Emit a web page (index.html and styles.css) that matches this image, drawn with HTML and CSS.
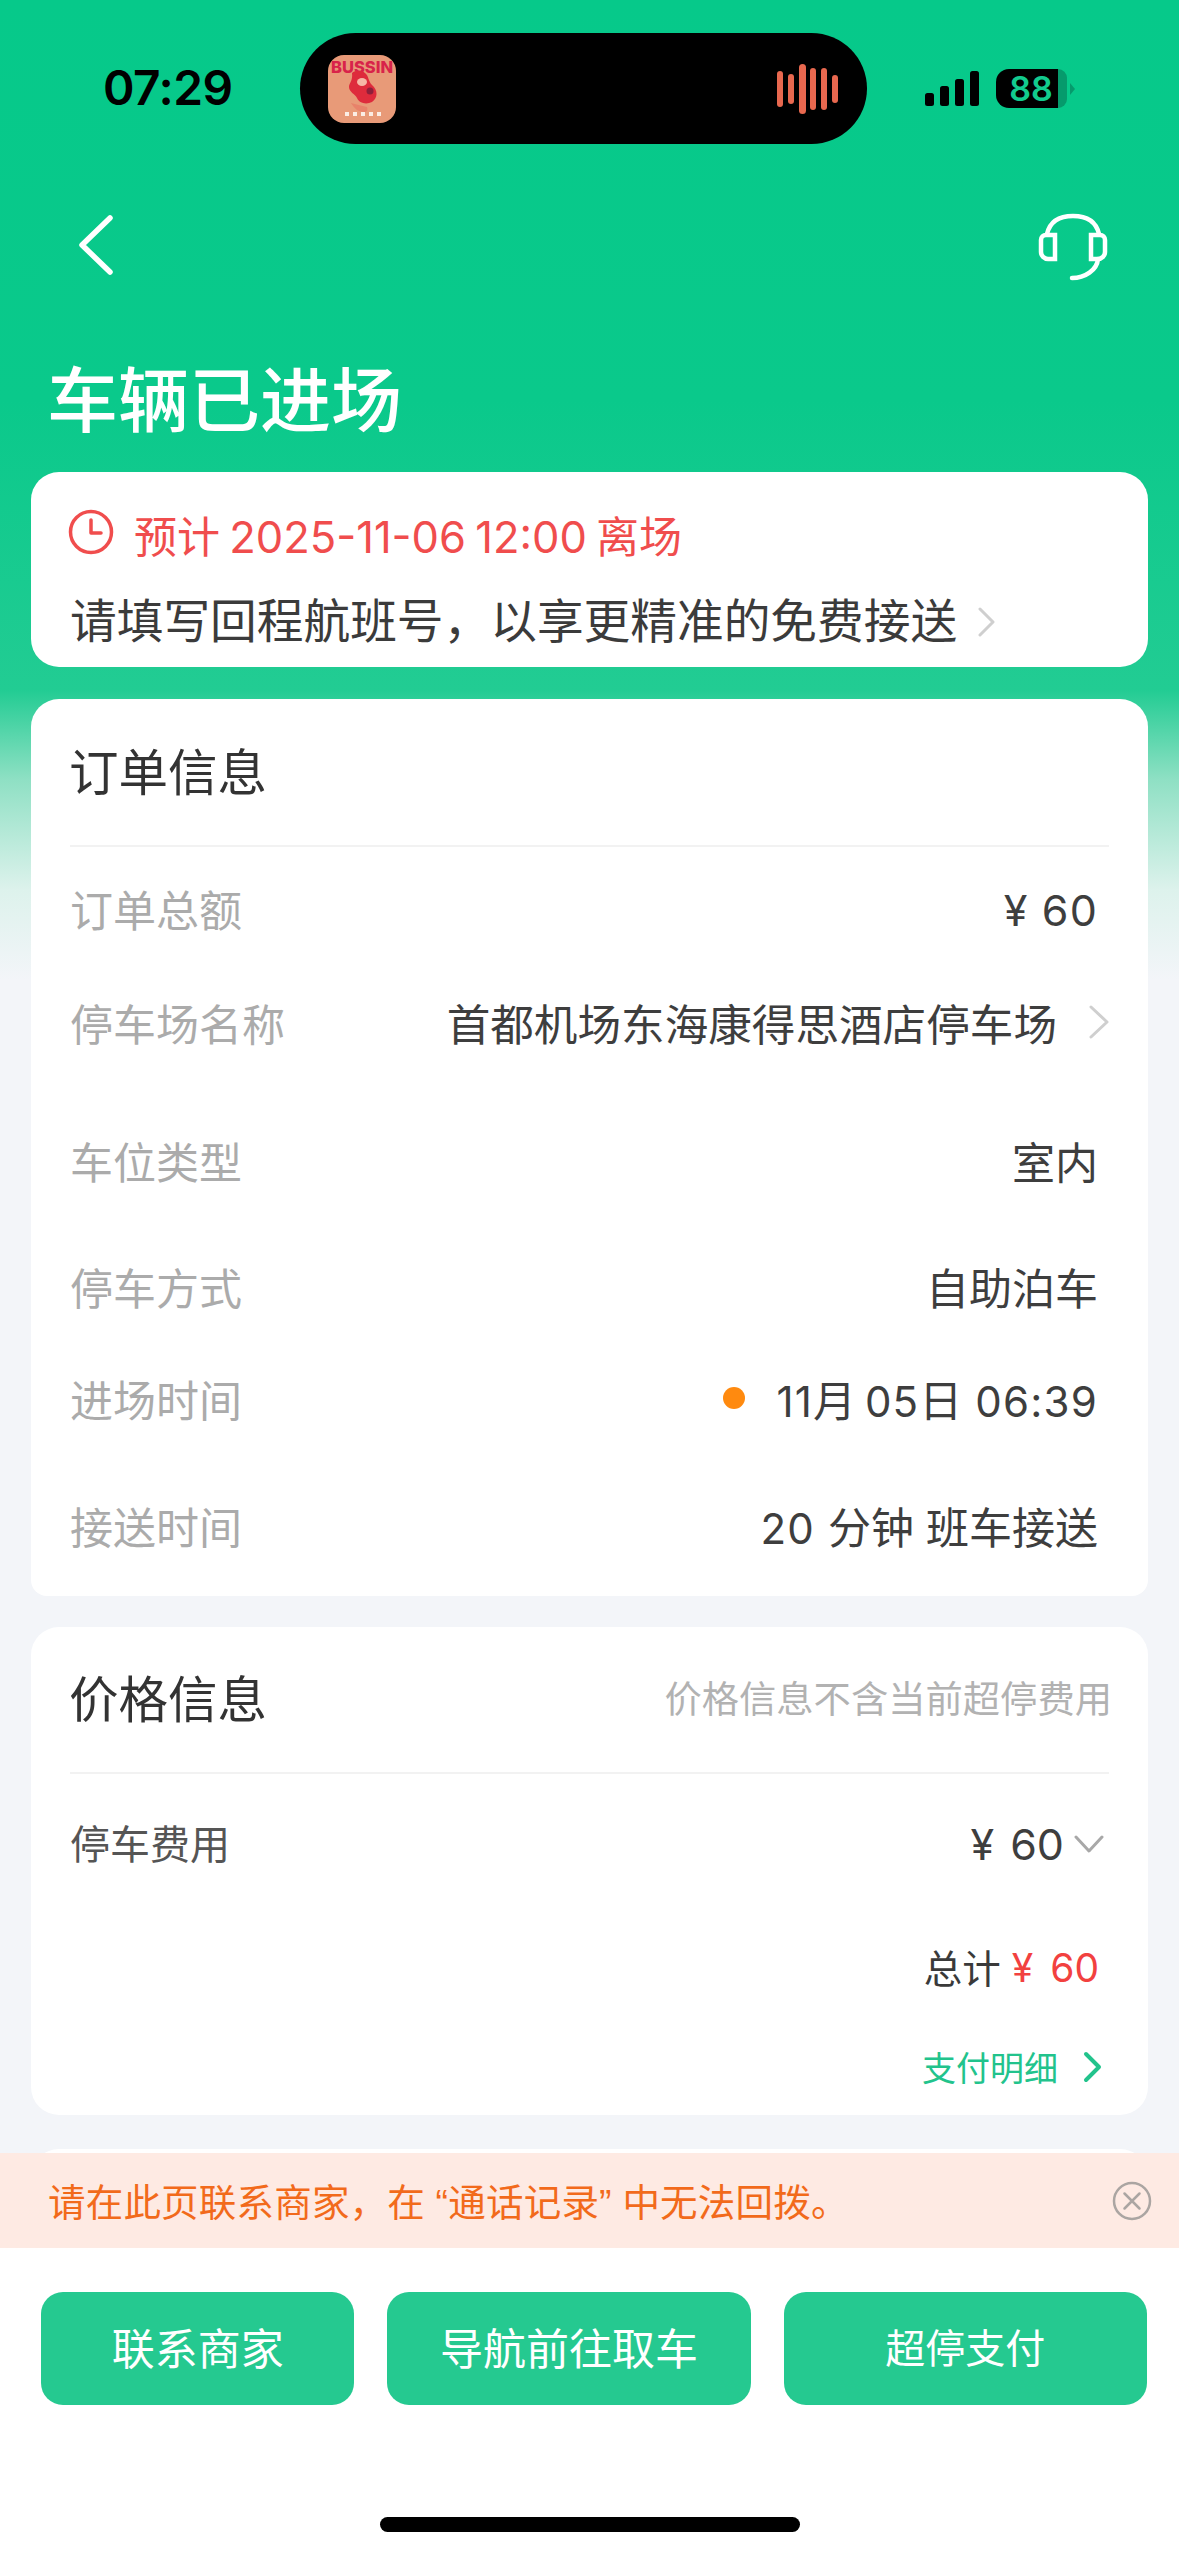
FILE: index.html
```html
<!DOCTYPE html>
<html lang="zh-CN">
<head>
<meta charset="utf-8">
<title>车辆已进场</title>
<link rel="stylesheet" href="styles.css">
</head>
<body>
<div class="page">
  <div class="scroll">
    <div class="status">
      <span class="time">07:29</span>
      <div class="island">
        <svg class="art" width="68" height="68" viewBox="0 0 68 68">
          <rect width="68" height="68" rx="16" fill="#E89A78"/>
          <text x="34" y="18" text-anchor="middle" class="art-text">BUSSIN</text>
          <path d="M23 48c3 5 7 9 13 9 3 0 4-2 3-5-6-1-11-3-16-4z" fill="#E8826A"/>
          <path d="M24 18c3-3 10-3 13 0 4 3 3 8 7 12 6 5 6 13 0 17-6 3-13 1-15-4-2-4-8-6-8-11 0-4 4-6 3-14z" fill="#DE2B3C"/>
          <ellipse cx="34" cy="27" rx="5" ry="4" fill="#F5B8A6"/>
          <circle cx="42" cy="36" r="3.500" fill="#8E1F3A"/>
          <g fill="#FBEDE4">
            <rect x="17" y="57" width="4" height="4"/><rect x="25" y="57" width="4" height="4"/><rect x="33" y="57" width="4" height="4"/><rect x="41" y="57" width="4" height="4"/><rect x="49" y="57" width="4" height="4"/>
          </g>
        </svg>
        <svg class="wave" width="61" height="50" viewBox="0 0 61 50" fill="#E8684F">
          <rect x="0" y="7" width="6" height="36" rx="3"/>
          <rect x="11" y="10" width="6" height="30" rx="3"/>
          <rect x="22" y="0" width="7" height="50" rx="3.500"/>
          <rect x="33" y="4" width="6" height="42" rx="3"/>
          <rect x="44" y="4" width="6" height="42" rx="3"/>
          <rect x="55" y="11" width="6" height="28" rx="3"/>
        </svg>
      </div>
      <svg class="signal" width="54" height="36" viewBox="0 0 54 36" fill="#000">
        <rect x="0" y="22" width="9" height="13" rx="2.500"/>
        <rect x="15" y="15" width="9" height="20" rx="2.500"/>
        <rect x="30" y="8" width="9" height="27" rx="2.500"/>
        <rect x="45" y="0" width="9" height="35" rx="2.500"/>
      </svg>
      <div class="battery">
        <span class="batt-fill">88</span>
        <span class="batt-rest"></span>
        <span class="batt-tip"></span>
      </div>
    </div>

    <div class="nav">
      <svg width="40" height="64" viewBox="0 0 40 64" fill="none" stroke="#fff" stroke-width="5.500" stroke-linecap="round" stroke-linejoin="round">
        <path d="M33 5 5 32l28 27"/>
      </svg>
      <svg class="headset" width="70" height="68" viewBox="0 0 70 68" fill="none" stroke="#fff" stroke-width="4.500" stroke-linecap="round">
        <path d="M9 21C12 8 22 3 35 3s23 5 26 18"/>
        <path d="M17 22H8a5 5 0 0 0-5 5v12a7 7 0 0 0 7 7h7z"/>
        <path d="M53 22h9a5 5 0 0 1 5 5v12a7 7 0 0 1-7 7h-7z"/>
        <path d="M60 46c-1 11-13 19-26 19"/>
      </svg>
    </div>

    <h1 class="title">车辆已进场</h1>

    <section class="card notice">
      <div class="alert">
        <svg class="clock" width="46" height="46" viewBox="0 0 46 46" fill="none" stroke="#F04D4D" stroke-width="3.500" stroke-linecap="round" stroke-linejoin="round">
          <circle cx="23" cy="23" r="20.500"/>
          <path d="M23 11v13h10"/>
        </svg>
        <span class="alert-text">预计<span class="alert-num"> 2025-11-06 12:00 </span>离场</span>
      </div>
      <div class="hint">
        <span class="hint-text">请填写回程航班号，以享更精准的免费接送</span>
        <svg class="hint-arrow" width="20" height="30" viewBox="0 0 20 30" fill="none" stroke="#CFCFCF" stroke-width="3" stroke-linecap="round" stroke-linejoin="round"><path d="M3 2l13 13L3 28"/></svg>
      </div>
    </section>

    <section class="card order">
      <div class="card-head order-head"><h2 class="card-title">订单信息</h2></div>
      <div class="order-rows">
        <div class="row"><span class="label">订单总额</span><span class="value value-amount num">¥ 60</span></div>
        <div class="row"><span class="label">停车场名称</span>
          <span class="value value-link">首都机场东海康得思酒店停车场
            <svg width="24" height="36" viewBox="0 0 24 36" fill="none" stroke="#CFCFCF" stroke-width="3" stroke-linecap="round" stroke-linejoin="round"><path d="M4 3l16 15L4 33"/></svg>
          </span></div>
        <div class="row"><span class="label">车位类型</span><span class="value">室内</span></div>
        <div class="row"><span class="label">停车方式</span><span class="value">自助泊车</span></div>
        <div class="row"><span class="label">进场时间</span><span class="value"><i class="dot"></i><span class="num">11</span>月<span class="num">&thinsp;05</span>日<span class="num">&nbsp;06:39</span></span></div>
        <div class="row"><span class="label">接送时间</span><span class="value"><span class="num">20&nbsp;</span>分钟&nbsp;班车接送</span></div>
      </div>
    </section>

    <section class="card price">
      <div class="card-head price-head">
        <h2 class="card-title">价格信息</h2>
        <span class="note">价格信息不含当前超停费用</span>
      </div>
      <div class="fee">
        <span class="fee-label">停车费用</span>
        <span class="fee-value">¥ 60
          <svg width="30" height="18" viewBox="0 0 30 18" fill="none" stroke="#A8A8A8" stroke-width="3" stroke-linecap="round" stroke-linejoin="round"><path d="M2 2l13 14L28 2"/></svg>
        </span>
      </div>
      <div class="total"><span class="total-label">总计</span><span class="total-value">¥ 60</span></div>
      <div class="detail">
        <span class="detail-text">支付明细</span>
        <svg width="20" height="32" viewBox="0 0 20 32" fill="none" stroke="#22C38C" stroke-width="4" stroke-linecap="round" stroke-linejoin="round"><path d="M3 3l13 13L3 29"/></svg>
      </div>
    </section>

    <section class="card more"></section>
  </div>

  <div class="banner">
    <span class="banner-text">请在此页联系商家，在 “通话记录” 中无法回拨。</span>
    <svg width="40" height="40" viewBox="0 0 40 40" fill="none" stroke="#ABA5A2" stroke-width="2.500" stroke-linecap="round">
      <circle cx="20" cy="20" r="18"/>
      <path d="M12.500 12.500l15 15M27.500 12.500l-15 15"/>
    </svg>
  </div>

  <div class="footer">
    <div class="actions">
      <button class="btn">联系商家</button>
      <button class="btn">导航前往取车</button>
      <button class="btn btn-small">超停支付</button>
    </div>
    <div class="home-bar"></div>
  </div>
</div>
</body>
</html>
```
FILE: styles.css
```css
* { box-sizing: border-box; }
html, body { margin: 0; padding: 0; }
body {
  font-family: "Liberation Sans", "Noto Sans CJK SC", sans-serif;
  color: #3B3B3B;
}
.page {
  width: 1179px;
  height: 2556px;
  display: flex;
  flex-direction: column;
  overflow: hidden;
  background: #fff;
}
.scroll {
  flex: 1;
  min-height: 0;
  overflow: hidden;
  padding: 0 31px;
  background: linear-gradient(180deg, #06C98A 0, #0AC98B 400px, #22CC93 690px, #8FE0C4 780px, #DDF2EC 890px, #F3F5F9 980px);
}
.num {
  font-family: "Inter", sans-serif;
  font-size: 42px;
  letter-spacing: 1.2px;
}

/* status bar */
.status {
  display: flex;
  align-items: center;
  height: 111px;
  margin: 33px 0 0 72px;
}
.time {
  width: 197px;
  font: 600 47.800px/1 "Inter", sans-serif;
  letter-spacing: -0.5px;
  color: #000;
}
.island {
  width: 567px;
  height: 111px;
  flex: none;
  display: flex;
  align-items: center;
  justify-content: space-between;
  padding: 0 29px 0 28px;
  background: #000;
  border-radius: 56px;
}
.art-text {
  font: 800 16.500px "Inter", sans-serif;
  fill: #D8234A;
}
.signal { margin-left: 58px; flex: none; }
.battery {
  display: flex;
  align-items: center;
  margin-left: 17px;
  flex: none;
}
.batt-fill {
  width: 62px;
  height: 39px;
  display: flex;
  align-items: center;
  justify-content: center;
  padding-left: 8px;
  background: #000;
  border-radius: 13px 0 0 13px;
  font: 600 34px/1 "Inter", sans-serif;
  color: #12CB8E;
}
.batt-rest {
  width: 9px;
  height: 39px;
  background: #069A6C;
  border-radius: 0 12px 12px 0;
}
.batt-tip {
  width: 0;
  height: 0;
  margin-left: 3px;
  border-left: 5px solid #069A6C;
  border-top: 6px solid transparent;
  border-bottom: 6px solid transparent;
}

/* nav + title */
.nav {
  height: 70px;
  margin-top: 66px;
  padding: 0 40px 0 46px;
  display: flex;
  align-items: center;
  justify-content: space-between;
}
.headset { margin-top: 3px; }
.title {
  margin: 72px 0 20px;
  padding-left: 16px;
  height: 100px;
  font-size: 71px;
  line-height: 100px;
  font-weight: 500;
  color: #fff;
}

/* cards */
.card {
  background: #fff;
  border-radius: 28px;
}
.notice {
  height: 195px;
  padding: 28px 39px 0;
}
.alert {
  height: 64px;
  display: flex;
  align-items: center;
  gap: 20px;
}
.clock { margin-left: -2px; }
.alert-text {
  margin-top: 3px;
  font-size: 43px;
  color: #F04D4D;
  white-space: nowrap;
}
.alert-num {
  font-family: "Inter", sans-serif;
  font-size: 43.500px;
  word-spacing: -3px;
}
.hint {
  margin-top: 22px;
  height: 72px;
  display: flex;
  align-items: center;
  gap: 20px;
}
.hint-text {
  font-size: 46.700px;
  line-height: 72px;
  white-space: nowrap;
}
.hint-arrow { flex: none; }

.order {
  margin-top: 32px;
  height: 897px;
  border-radius: 28px 28px 16px 16px;
  padding: 0 39px;
}
.card-head {
  display: flex;
  align-items: center;
  justify-content: space-between;
  padding-bottom: 6px;
  border-bottom: 2px solid #F2F2F2;
}
.order-head { height: 148px; }
.price-head { height: 147px; }
.card-title {
  margin: 0 0 0 -1px;
  font-size: 49.500px;
  font-weight: 400;
  color: #333;
}
.order-rows {
  display: grid;
  grid-template-rows: 126px 102px 174px 78px 146px 108px;
}
.row {
  display: flex;
  align-items: center;
  justify-content: space-between;
  padding-right: 11px;
  padding-bottom: 5px;
}
.label {
  font-size: 43px;
  color: #ABABAB;
}
.value {
  font-size: 43px;
  color: #3E3E3E;
  white-space: nowrap;
  display: flex;
  align-items: baseline;
}
.value-amount { margin-top: 5px; }
.value-link {
  align-items: center;
  gap: 30px;
  margin-right: -13px;
  font-size: 43.600px;
}
.dot {
  width: 22px;
  height: 22px;
  margin: 0 32px 0 0;
  align-self: center;
  border-radius: 50%;
  background: #FF8A0F;
}

.price {
  margin-top: 31px;
  height: 488px;
  padding: 0 39px;
}
.note {
  font-size: 37.300px;
  color: #B2B2B2;
  margin-right: -3px;
}
.fee {
  height: 140px;
  display: flex;
  align-items: center;
  justify-content: space-between;
}
.fee-label {
  padding-bottom: 5px;
  font-size: 40px;
  color: #555;
}
.fee-value {
  font-family: "Inter", sans-serif;
  font-size: 43px;
  word-spacing: 4px;
  color: #3E3E3E;
  display: flex;
  align-items: center;
  gap: 10px;
  margin-right: 5px;
}
.total {
  height: 106px;
  display: flex;
  align-items: center;
  justify-content: flex-end;
  gap: 11px;
  padding-right: 10px;
}
.total-label { font-size: 38.500px; color: #3A3A3A; padding-bottom: 3px; }
.total-value { font-family: "Inter", sans-serif; font-size: 39px; word-spacing: 6px; color: #F2413F; }
.detail {
  height: 93px;
  display: flex;
  align-items: center;
  justify-content: flex-end;
  gap: 25px;
  padding-right: 6px;
}
.detail-text {
  font-size: 34px;
  color: #22C38C;
}
.more {
  margin-top: 34px;
  height: 60px;
}

/* banner + footer */
.banner {
  flex: none;
  height: 95px;
  padding: 0 27px 0 48px;
  display: flex;
  align-items: center;
  justify-content: space-between;
  background: #FEEAE3;
}
.banner-text {
  padding-bottom: 2px;
  font-size: 37.500px;
  letter-spacing: 0.2px;
  color: #F26A1B;
  white-space: nowrap;
}
.footer {
  flex: none;
  height: 308px;
  padding: 44px 32px 0 41px;
  background: #fff;
}
.actions {
  display: grid;
  grid-template-columns: 314fr 364fr 364fr;
  gap: 33px;
}
.btn {
  height: 113px;
  padding: 0 0 5px;
  border: 0;
  border-radius: 22px;
  background: #25C990;
  color: #fff;
  font-family: inherit;
  font-size: 43px;
}
.btn-small { font-size: 40px; }
.home-bar {
  width: 420px;
  height: 15px;
  margin: 112px 0 0 339px;
  border-radius: 8px;
  background: #000;
}
```
